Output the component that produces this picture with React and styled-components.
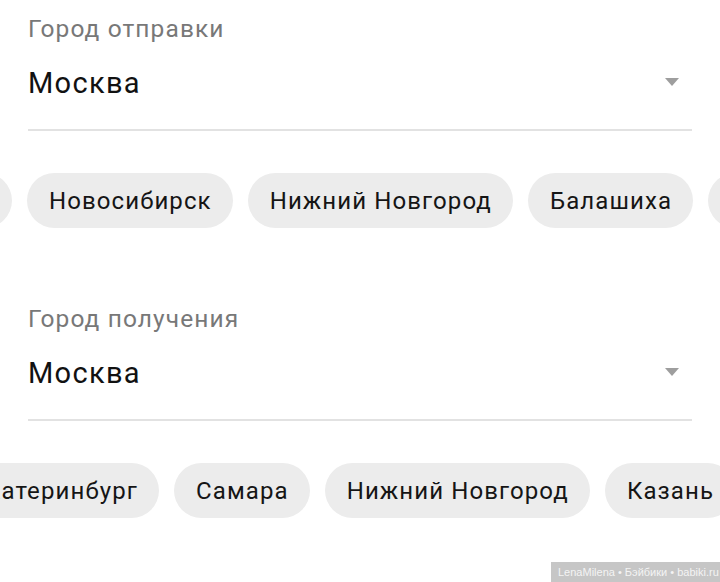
import React from "react";
import styled, { createGlobalStyle } from "styled-components";

const Global = createGlobalStyle`
  html, body { margin: 0; padding: 0; background: #ffffff; }
  body { font-family: Roboto, "Noto Sans", "Liberation Sans", sans-serif; }
  * { box-sizing: border-box; }
`;

const Page = styled.div`
  position: relative;
  width: 720px;
  height: 582px;
  overflow: hidden;
  background: #fff;
`;

const Section = styled.section`
  padding-top: ${(p) => p.$top}px;
`;

const Field = styled.div`
  margin: 0 28px;
  border-bottom: 2px solid #e2e2e2;
  height: ${(p) => p.$height}px;
`;

const Label = styled.div`
  font-size: 24.5px;
  line-height: 27px;
  color: #787878;
  letter-spacing: 1.1px;
`;

const ValueRow = styled.div`
  display: flex;
  align-items: center;
  justify-content: space-between;
  margin-top: 25px;
  height: 33px;
`;

const Value = styled.span`
  font-size: 29px;
  line-height: 33px;
  color: #111;
  letter-spacing: 1.3px;
`;

const Caret = styled.svg`
  width: 14px;
  height: 8px;
  margin-right: 13px;
  margin-top: -4px;
  fill: #9e9e9e;
`;

const ChipRow = styled.div`
  margin-top: 42px;
  display: flex;
  gap: 15px;
  overflow: hidden;
  width: 720px;
`;

const Lead = styled.div`
  flex: 0 0 ${(p) => p.$width}px;
  width: ${(p) => p.$width}px;
  min-width: 0;
  display: flex;
  justify-content: flex-end;
`;

const Chip = styled.div`
  flex: 0 0 auto;
  height: 55px;
  padding: 0 21px 0 22px;
  border-radius: 28px;
  background: #ececec;
  display: flex;
  align-items: center;
  font-size: 24px;
  letter-spacing: 1.1px;
  color: #151515;
  white-space: nowrap;
`;

const Watermark = styled.div`
  position: absolute;
  right: 0;
  bottom: 0;
  width: 169px;
  height: 20px;
  background: #c6c6c6;
  color: #f4f4f4;
  font-family: "Liberation Sans", Arial, sans-serif;
  font-size: 11px;
  line-height: 20px;
  padding-left: 7px;
  white-space: nowrap;
  overflow: hidden;
`;

function CityField({ label, value, top, chips, lead, leadWidth }) {
  return (
    <Section $top={top}>
      <Field $height={116}>
        <Label>{label}</Label>
        <ValueRow>
          <Value>{value}</Value>
          <Caret viewBox="0 0 14 8">
            <path d="M0 0 H14 L7 8 Z" />
          </Caret>
        </ValueRow>
      </Field>
      <ChipRow>
        <Lead $width={leadWidth}>
          <Chip>{lead}</Chip>
        </Lead>
        {chips.map((c, i) => (
          <Chip key={i}>{c}</Chip>
        ))}
      </ChipRow>
    </Section>
  );
}

export default function App() {
  return (
    <>
      <Global />
      <Page>
        <CityField
          top={15}
          label="Город отправки"
          value="Москва"
          lead="Санкт-Петербург"
          leadWidth={12}
          chips={["Новосибирск", "Нижний Новгород", "Балашиха", "Казань"]}
        />
        <CityField
          top={77}
          label="Город получения"
          value="Москва"
          lead="Екатеринбург"
          leadWidth={159}
          chips={["Самара", "Нижний Новгород", "Казань", "Балашиха"]}
        />
        <Watermark>LenaMilena • Бэйбики • babiki.ru</Watermark>
      </Page>
    </>
  );
}
